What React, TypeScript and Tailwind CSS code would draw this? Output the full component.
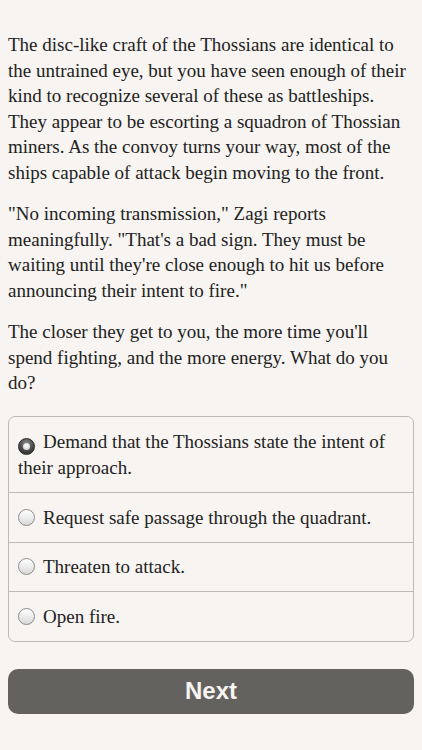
import { useState } from "react";

const paragraphs = [
  [
    "The disc-like craft of the Thossians are identical to",
    "the untrained eye, but you have seen enough of their",
    "kind to recognize several of these as battleships.",
    "They appear to be escorting a squadron of Thossian",
    "miners. As the convoy turns your way, most of the",
    "ships capable of attack begin moving to the front.",
  ],
  [
    "\"No incoming transmission,\" Zagi reports",
    "meaningfully. \"That's a bad sign. They must be",
    "waiting until they're close enough to hit us before",
    "announcing their intent to fire.\"",
  ],
  [
    "The closer they get to you, the more time you'll",
    "spend fighting, and the more energy. What do you",
    "do?",
  ],
];

const choices = [
  ["Demand that the Thossians state the intent of", "their approach."],
  ["Request safe passage through the quadrant."],
  ["Threaten to attack."],
  ["Open fire."],
];

function Radio({ on }: { on: boolean }) {
  if (on) {
    return (
      <span className="inline-flex align-[-2px] mr-[8px] w-[17px] h-[17px] rounded-full items-center justify-center bg-[radial-gradient(circle_at_50%_30%,#8a8a8a,#3a3a3a_70%)] border border-[#2a2a2a]">
        <span className="w-[7px] h-[7px] rounded-full bg-[radial-gradient(circle_at_50%_40%,#ffffff,#c8c8c8)]" />
      </span>
    );
  }
  return (
    <span className="inline-block align-[-2px] mr-[8px] w-[17px] h-[17px] rounded-full border border-[#8c8c8c] bg-[linear-gradient(#ffffff,#d9d9d9)]" />
  );
}

export default function App() {
  const [picked, setPicked] = useState(0);
  return (
    <div className="min-h-[750px] w-full bg-[#f7f4f1] px-[8px] pt-[32px] text-[#222] font-['Liberation_Serif',serif] text-[19px] leading-[25.5px]">
      {paragraphs.map((lines, i) => (
        <p key={i} className={i < 2 ? "mb-[16px]" : ""}>
          {lines.map((l) => (
            <span key={l} className="block">
              {l}
            </span>
          ))}
        </p>
      ))}

      <div className="mt-[20px] border border-[#bdbbb9] rounded-[7px] overflow-hidden">
        {choices.map((c, i) => (
          <div
            key={c[0]}
            onClick={() => setPicked(i)}
            className={`px-[9px] cursor-pointer ${i > 0 ? "border-t border-[#bdbbb9] py-[11.5px]" : "py-[12px]"}`}
          >
            <span className="block">
              <Radio on={picked === i} />
              {c[0]}
            </span>
            {c[1] && <span className="block">{c[1]}</span>}
          </div>
        ))}
      </div>

      <button className="mt-[27px] w-full h-[45px] rounded-[10px] bg-[#64625f] text-[#f7f4f1] font-['Liberation_Sans',sans-serif] font-bold text-[24px]">
        Next
      </button>
    </div>
  );
}
